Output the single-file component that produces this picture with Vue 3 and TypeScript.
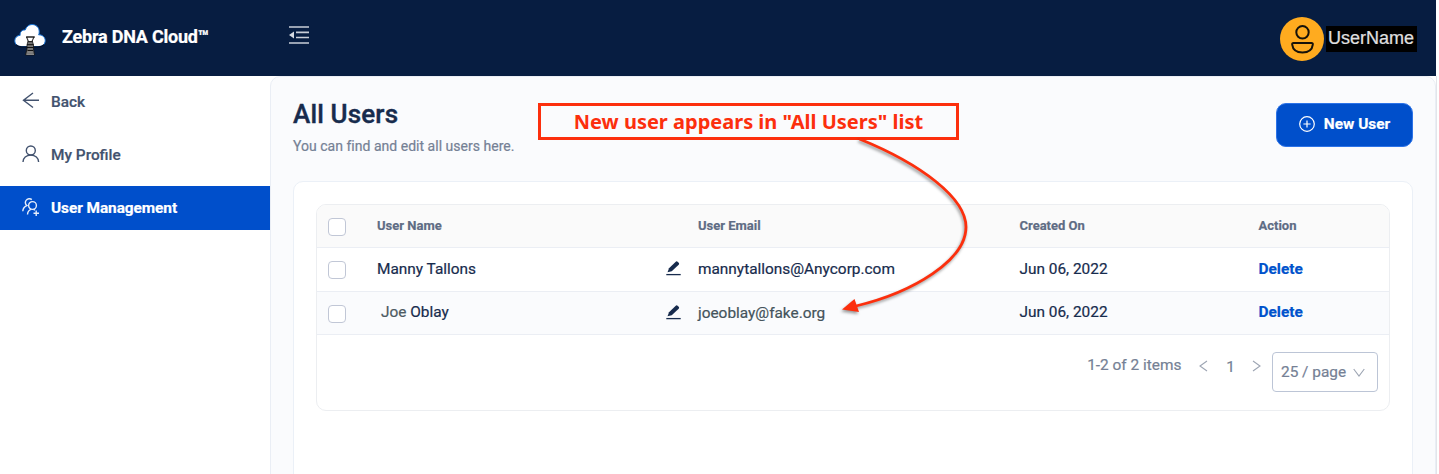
<script setup lang="ts">
interface UserRow {
  first: string
  last: string
  email: string
  created: string
  masked: boolean
}

const columns: string[] = ['User Name', 'User Email', 'Created On', 'Action']

const users: UserRow[] = [
  { first: 'Manny', last: 'Tallons', email: 'mannytallons@Anycorp.com', created: 'Jun 06, 2022', masked: false },
  { first: 'Joe', last: 'Oblay', email: 'joeoblay@fake.org', created: 'Jun 06, 2022', masked: true },
]
</script>

<template>
  <div class="app">
    <header class="topbar">
      <svg class="logo" viewBox="0 0 34 34" width="34" height="34">
        <path d="M8 24.5C4.200 24.500 1.800 22 1.800 18.800C1.800 15.700 4 13.500 7.200 13.300C6.700 10.500 8.700 7.600 12.200 8C13.300 4.700 15.800 2.500 19 2.500C23 2.500 26 5.300 26.200 9.200C26.300 10.800 26.100 11.800 25.600 12.800C29.400 12.600 32.200 15.200 32.200 18.600C32.200 22 29.700 24.500 26 24.500Z" fill="#fff" stroke="#1674d8" stroke-width="1" />
        <path d="M3 22.800Q5 25 9 25H25Q29 25 31 22.800" fill="none" stroke="#06132c" stroke-width="1.300" />
        <path d="M13.500 15H21L19.300 19L20.500 23V27L21.500 33H12.500L14 27V23L15 19Z" fill="#777" stroke="#111" stroke-width=".8" />
        <path d="M14.500 15.500H20L18.500 19H16Z" fill="#fff" />
        <path d="M13 15H22M15 19.700H19.500M14 22.700H20.500M14 25.500H20.500M14.500 28.500H20" stroke="#111" stroke-width="1" />
        <path d="M13.500 32.500H21M15 30H19.500" stroke="#888" stroke-width="1" />
      </svg>
      <span class="brand">Zebra DNA Cloud™</span>
      <svg class="fold" viewBox="0 0 20 18" width="20" height="18">
        <path d="M0 1H20M7 6.300H20M7 11.500H20M0 17H20" stroke="#c9ced8" stroke-width="1.700" fill="none" />
        <path d="M0 9L5 5.500V12.500Z" fill="#d6dae2" />
      </svg>
      <div class="account">
        <svg viewBox="0 0 44 44" width="44" height="44">
          <circle cx="22" cy="22" r="22" fill="#ffab1f" />
          <circle cx="22.500" cy="15.300" r="6.200" fill="none" stroke="#16120a" stroke-width="2" />
          <path d="M13.500 26H31.500Q33 26 32.800 27.700C32.200 32.500 28.500 35.500 22.500 35.500C16.500 35.500 12.800 32.500 12.200 27.700Q12 26 13.500 26Z" fill="none" stroke="#16120a" stroke-width="2" />
        </svg>
        <span class="account-name">UserName</span>
      </div>
    </header>

    <div class="body">
      <nav class="sidebar">
        <a class="nav-item">
          <svg viewBox="0 0 18 18" width="18" height="18" class="ic">
            <path d="M17 8.300H1.500M11 1L1.500 8.300L11 15.500" />
          </svg>
          <span>Back</span>
        </a>
        <a class="nav-item">
          <svg viewBox="0 0 18 18" width="18" height="18" class="ic">
            <circle cx="8.800" cy="5.500" r="4.500" />
            <path d="M1 17C1 12.800 4.300 10.100 8.800 10.100C13.300 10.100 16.600 12.800 16.600 17" />
          </svg>
          <span>My Profile</span>
        </a>
        <a class="nav-item active">
          <svg viewBox="0 0 18 18" width="18" height="18" class="ic">
            <circle cx="10.500" cy="7.500" r="3.900" />
            <path d="M5.500 16.500C5.700 13.700 7.300 11.900 9.300 11.400M11.500 11.400L13 12.200M9.800 1.600C8.200 .2 5.300 .4 4 2.500C2.900 4.400 3.400 6.300 4.900 7.600C2.500 8.500 1 10.400 .8 13.200M11.500 15.200H17M14.200 12.400V18" />
          </svg>
          <span>User Management</span>
        </a>
      </nav>

      <main class="content">
        <div class="page-head">
          <div>
            <h1>All Users</h1>
            <p>You can find and edit all users here.</p>
          </div>
          <button class="new-user" type="button">
            <svg viewBox="0 0 16 16" width="16" height="16">
              <circle cx="8" cy="8" r="7.300" />
              <path d="M8 4.400V11.600M4.400 8H11.600" />
            </svg>
            <span>New User</span>
          </button>
        </div>

        <section class="card">
          <div class="table">
            <div class="row head">
              <i class="check"></i>
              <span v-for="c in columns" :key="c" class="cell th"><b>{{ c }}</b></span>
            </div>
            <div v-for="u in users" :key="u.email" class="row" :class="{ masked: u.masked }">
              <i class="check"></i>
              <span class="cell name">
                <span class="full"><span class="first">{{ u.first }}</span> {{ u.last }}</span>
                <svg class="edit" viewBox="0 0 15 15" width="15" height="15">
                  <path d="M1.500 11.300L3 7.300L9.500 .9Q10.700 -.2 11.800 .9L12.700 1.800Q13.500 2.700 12.700 3.700L5.700 10.300Z" fill="#172b4d" />
                  <path d="M.3 13.600H14.700" stroke="#172b4d" stroke-width="1.300" />
                </svg>
              </span>
              <span class="cell email">{{ u.email }}</span>
              <span class="cell">{{ u.created }}</span>
              <a class="cell delete">Delete</a>
            </div>
            <div class="pager">
              <span class="total">1-2 of 2 items</span>
              <svg class="prev" viewBox="0 0 9 12" width="9" height="12"><path d="M8 1L1 6L8 11" /></svg>
              <span class="num">1</span>
              <svg class="next" viewBox="0 0 9 12" width="9" height="12"><path d="M1 1L8 6L1 11" /></svg>
              <span class="size">
                <span>25 / page</span>
                <svg viewBox="0 0 12 9" width="12" height="9"><path d="M.7 1L6 8L11.300 1" /></svg>
              </span>
            </div>
          </div>
        </section>
      </main>
    </div>

    <div class="callout"><span>New user appears in "All Users" list</span></div>
    <svg class="arrow" viewBox="0 0 140 190" width="140" height="190">
      <path d="M28.500 9C90 34 135 68 135 97C135 130 83 162 25 176" fill="none" stroke="#fc2f0d" stroke-width="2.800" />
      <path d="M11 179.500L23.500 169L28 182Z" fill="#fc2f0d" />
    </svg>
  </div>
</template>

<style>
body {
  margin: 0;
  overflow: hidden;
  background: #fff;
}
</style>

<style scoped>
.app {
  position: relative;
  width: 1439px;
  height: 474px;
  overflow: hidden;
  font-family: Roboto, "Liberation Sans", sans-serif;
  font-size: 15.4px;
  color: #172b4d;
  white-space: nowrap;
  -webkit-text-stroke-width: 0.2px;
}
.topbar {
  box-sizing: border-box;
  width: 1436px;
  height: 76px;
  padding-left: 13px;
  display: flex;
  align-items: center;
  background: #071d41;
}
.logo { margin-top: 1px; }
.brand {
  width: 227px;
  margin-left: 15px;
  margin-top: -3px;
  font-size: 18px;
  font-weight: 700;
  letter-spacing: -0.22px;
  color: #fff;
}
.fold { margin-top: -6px; }
.account {
  margin-left: auto;
  margin-right: 19px;
  margin-top: 2px;
  display: flex;
  align-items: center;
  gap: 2px;
}
.account svg { display: block; }
.account-name {
  width: 91px;
  height: 26px;
  box-sizing: border-box;
  padding-left: 2px;
  line-height: 25px;
  background: #000;
  color: #e0e0e0;
  font-family: "Liberation Sans", Arial, sans-serif;
  font-size: 18px;
}
.body {
  display: flex;
  width: 1436px;
  height: 398px;
  border-right: 1px solid #e3e5ea;
}
.sidebar {
  width: 270px;
  flex: none;
  box-sizing: border-box;
  padding-top: 4px;
  display: flex;
  flex-direction: column;
  gap: 9px;
}
.nav-item {
  height: 44px;
  display: flex;
  align-items: center;
  padding-left: 22px;
  gap: 11px;
  font-weight: 500;
  color: #42526e;
}
.nav-item span { margin-top: -1px; }
.nav-item .ic {
  margin-top: -3px;
  fill: none;
  stroke: #42526e;
  stroke-width: 1.4;
}
.nav-item.active {
  background: #004fcb;
  color: #fff;
  font-weight: 700;
  letter-spacing: -0.06px;
}
.nav-item.active .ic { stroke: #e6eefb; }
.content {
  box-sizing: border-box;
  flex: 1;
  height: 420px;
  padding: 26px 22px 0;
  border: 1px solid #eaeef5;
  border-radius: 10px 10px 0 0;
  background: #fafbfd;
}
.page-head {
  display: flex;
  justify-content: space-between;
  height: 78px;
}
h1 {
  margin: -5px 0 0;
  font-size: 26px;
  line-height: 32px;
  font-weight: 500;
  letter-spacing: 0.15px;
  -webkit-text-stroke-width: 0.4px;
}
p {
  margin: 6px 0 0;
  font-size: 14px;
  line-height: 20px;
  letter-spacing: 0.02px;
  color: #758195;
}
.new-user {
  box-sizing: border-box;
  width: 137px;
  height: 44px;
  display: flex;
  align-items: center;
  justify-content: center;
  gap: 9px;
  padding: 0 0 2px;
  border: 1px solid #2c73e8;
  border-radius: 10px;
  background: #004fcb;
  color: #fff;
  font: 700 15.4px Roboto, sans-serif;
}
.new-user svg {
  fill: none;
  stroke: #fff;
  stroke-width: 1.2;
}
.card {
  box-sizing: border-box;
  height: 320px;
  padding: 22px;
  border: 1px solid #ebf0f7;
  border-radius: 10px;
  background: #fff;
}
.table {
  box-sizing: border-box;
  height: 207px;
  border: 1px solid #eceef1;
  border-radius: 10px;
  overflow: hidden;
}
.row {
  display: grid;
  grid-template-columns: 60px 321px 321.5px 239px 1fr;
  align-items: center;
  height: 43px;
  box-sizing: border-box;
  border-bottom: 1px solid #ebeef4;
}
.row.head {
  background: #fafafa;
}
.row:nth-child(2) { height: 44px; }
.row.masked { background: #fafbfd; }
.check {
  box-sizing: border-box;
  width: 18px;
  height: 18px;
  margin: 2px 0 0 11px;
  border: 1px solid #c1c7d6;
  border-radius: 4px;
  background: #fff;
}
.row:nth-child(2) .check { margin-top: 1px; }
.cell { margin-top: -2px; }
.th {
  font-size: 13px;
  color: #5e6c84;
}
.name {
  display: flex;
  justify-content: space-between;
  align-items: center;
}
.edit { margin-right: 17px; }
.masked .full { margin-left: 4px; }
.masked .first { color: #4d5a62; }
.masked .email {
  color: #44535b;
  margin-top: 0;
}
.delete {
  font-weight: 700;
  color: #0052cc;
}
.pager {
  display: flex;
  align-items: flex-start;
  justify-content: flex-end;
  padding: 17px 11px 0 0;
  color: #758195;
}
.pager svg {
  fill: none;
  stroke: #9da5b3;
  stroke-width: 1.1;
}
.total { margin: 4px 18px 0 0; }
.prev, .next { margin-top: 8px; }
.num { margin: 6px 17px 0 18px; }
.size {
  box-sizing: border-box;
  width: 106px;
  height: 40px;
  margin-left: 11px;
  padding: 0 12px 0 8px;
  display: flex;
  align-items: center;
  justify-content: space-between;
  border: 1px solid #bcc5d6;
  border-radius: 4px;
}
.callout {
  position: absolute;
  left: 538px;
  top: 103px;
  width: 421px;
  height: 37px;
  box-sizing: border-box;
  border: 3px solid #fc2f0d;
  display: flex;
  align-items: center;
  justify-content: center;
  color: #fc2f0d;
  font: 700 20px "Noto Sans", sans-serif;
  -webkit-text-stroke-width: 0;
}
.arrow {
  position: absolute;
  left: 831px;
  top: 130px;
  filter: drop-shadow(-1px 2px 1.500px rgba(0, 0, 0, 0.4));
}
</style>
